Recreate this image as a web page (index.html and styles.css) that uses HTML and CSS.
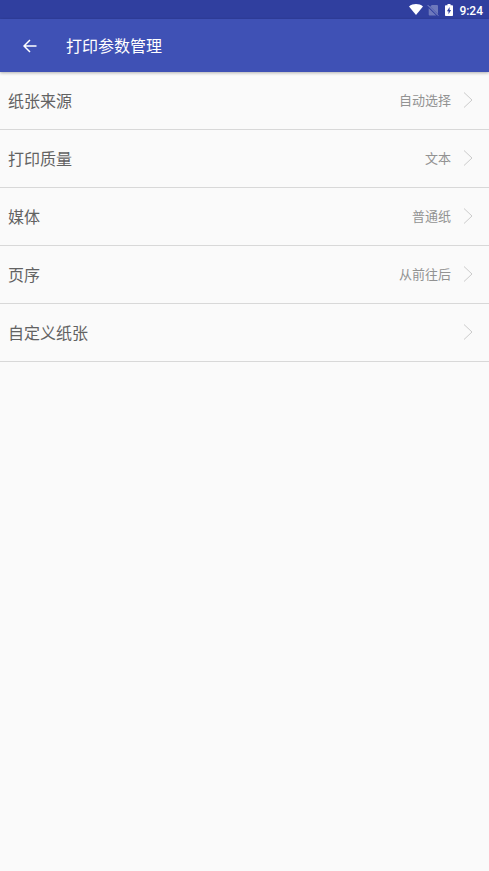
FILE: index.html
```html
<!DOCTYPE html>
<html lang="zh-CN">
<head>
<meta charset="utf-8">
<meta name="viewport" content="width=device-width, initial-scale=1">
<title>打印参数管理</title>
<link rel="stylesheet" href="styles.css">
</head>
<body>
<div class="status-bar">
  <svg class="wifi" viewBox="0 0 14 11" aria-hidden="true"><path d="M7 11 0 2.4C4-.8 10-.8 14 2.4Z"/></svg>
  <svg class="no-sim" viewBox="0 0 12 12" aria-hidden="true"><path class="sim" d="M4.8 1H10q1 0 1 1v8.2L3.2 2.5ZM1.7 4.2 9.2 11.5H2.6q-.9 0-.9-1Z"/><path class="slash" d="m.8 1.2 10.4 10.4"/></svg>
  <svg class="battery" viewBox="0 0 8 12" aria-hidden="true"><path fill-rule="evenodd" d="M2.5 0h3v1.2h1.7q.8 0 .8.8v9.2q0 .8-.8.8H.8q-.8 0-.8-.8V2q0-.8.8-.8h1.7ZM4.6 3 1.9 7.2h1.6v3L6.1 6H4.6Z"/></svg>
  <span class="clock">9:24</span>
</div>
<header class="app-bar">
  <button class="back" type="button" aria-label="返回">
    <svg viewBox="0 0 14 14" aria-hidden="true"><path d="M13.5 7H1.2M7 1 1 7l6 6"/></svg>
  </button>
  <h1 class="title">打印参数管理</h1>
</header>
<main class="settings">
  <button class="row" type="button"><span class="label">纸张来源</span><span class="value">自动选择</span><svg class="chevron" viewBox="0 0 10 16" aria-hidden="true"><path d="m1 .5 8 7.5-8 7.5"/></svg></button>
  <button class="row" type="button"><span class="label">打印质量</span><span class="value">文本</span><svg class="chevron" viewBox="0 0 10 16" aria-hidden="true"><path d="m1 .5 8 7.5-8 7.5"/></svg></button>
  <button class="row" type="button"><span class="label">媒体</span><span class="value">普通纸</span><svg class="chevron" viewBox="0 0 10 16" aria-hidden="true"><path d="m1 .5 8 7.5-8 7.5"/></svg></button>
  <button class="row" type="button"><span class="label">页序</span><span class="value">从前往后</span><svg class="chevron" viewBox="0 0 10 16" aria-hidden="true"><path d="m1 .5 8 7.5-8 7.5"/></svg></button>
  <button class="row" type="button"><span class="label">自定义纸张</span><svg class="chevron" viewBox="0 0 10 16" aria-hidden="true"><path d="m1 .5 8 7.5-8 7.5"/></svg></button>
</main>
</body>
</html>
```
FILE: styles.css
```css
* {
  box-sizing: border-box;
}

body {
  margin: 0;
  background: #fafafa;
  color: #626262;
  font-family: Roboto, "Noto Sans CJK SC", sans-serif;
}

button {
  border: 0;
  background: none;
  color: inherit;
  font: inherit;
  cursor: pointer;
}

.status-bar {
  display: flex;
  align-items: center;
  justify-content: flex-end;
  height: 19px;
  padding-right: 6px;
  background: #303f9f;
  color: #fff;
}

.status-bar svg {
  fill: #fff;
}

.wifi {
  width: 14px;
  height: 11px;
  margin-right: 4px;
}

.no-sim {
  width: 12px;
  height: 12px;
  margin-right: 6px;
}

.sim {
  opacity: 0.3;
}

.slash {
  stroke: #8d96cc;
  stroke-width: 1;
}

.battery {
  width: 8px;
  height: 12px;
  margin-right: 6px;
}

.clock {
  padding-top: 2px;
  font-size: 12px;
  font-weight: 500;
  line-height: 16px;
}

.app-bar {
  display: flex;
  align-items: center;
  height: 53px;
  padding-left: 15px;
  background: #3f51b5;
  box-shadow: 0 1px 3px rgba(0, 0, 0, 0.3);
  color: #fff;
}

.back {
  display: flex;
  padding: 8px;
}

.back svg {
  width: 14px;
  height: 14px;
  fill: none;
  stroke: #fff;
  stroke-width: 1.5;
}

.title {
  margin: 0 0 0 21px;
  padding-top: 2px;
  font-size: 16px;
  font-weight: 400;
  line-height: 24px;
}

.settings {
  display: flex;
  flex-direction: column;
}

.row {
  display: flex;
  align-items: center;
  height: 58px;
  padding: 0 16px 1px 8px;
  border-bottom: 1px solid #d8d8d8;
  text-align: left;
}

.label {
  flex: 1;
  padding-top: 4px;
  font-size: 16px;
  line-height: 24px;
}

.value {
  padding-top: 2px;
  color: #929292;
  font-size: 13px;
  line-height: 20px;
}

.chevron {
  width: 10px;
  height: 16px;
  margin-left: 12px;
  fill: none;
  stroke: #cbcbcb;
  stroke-width: 1;
}
```
